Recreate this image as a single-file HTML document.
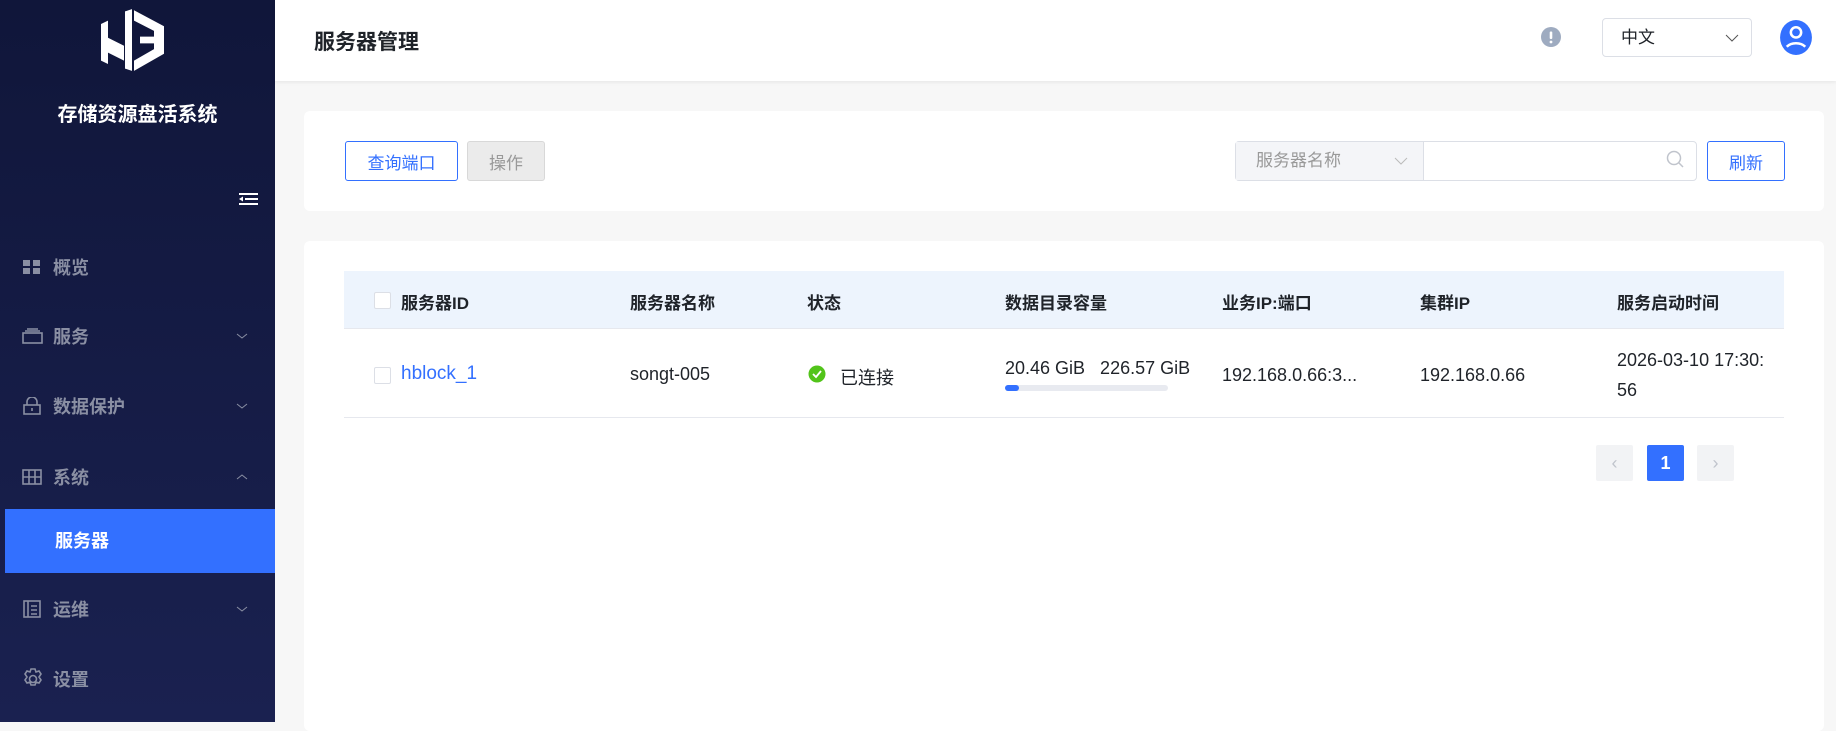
<!DOCTYPE html>
<html><head><meta charset="utf-8"><style>
*{margin:0;padding:0;box-sizing:border-box}
body{width:1836px;height:722px;overflow:hidden;background:#f7f7f7;font-family:"Liberation Sans","Noto Sans CJK SC",sans-serif;position:relative;color:#1f2329}
.side{position:absolute;left:0;top:0;width:275px;height:722px;background:linear-gradient(#10163a,#1a2150)}
.abs{position:absolute}
.mi{position:absolute;left:0;width:275px;height:40px;color:#8a8fa3;font-size:18px;font-weight:bold;display:flex;align-items:center}
.mi .t{position:absolute;left:53px}
.mi svg.i{position:absolute;left:22px}
.mi .ch{position:absolute;left:236px}
.hdr{position:absolute;left:275px;top:0;right:0;height:81px;background:#fff;box-shadow:0 1px 4px rgba(0,0,0,.08)}
.card{position:absolute;background:#fff;border-radius:6px}
.btn{position:absolute;height:40px;border:1px solid #3370ff;border-radius:3px;color:#3370ff;font-size:17px;display:flex;align-items:center;justify-content:center;background:#fff}
.th{position:absolute;top:289px;font-size:17px;font-weight:bold;color:#1f2329}
.td{position:absolute;font-size:18px;color:#1f2329}
.cb{position:absolute;width:17px;height:17px;border:1px solid #dcdfe6;border-radius:2px;background:#fff}
.pg{position:absolute;top:445px;width:37px;height:36px;border-radius:2px;display:flex;align-items:center;justify-content:center;font-size:18px}
</style></head><body>
<div class="side">
<svg class="abs" style="left:98px;top:8px" width="70" height="64" viewBox="0 0 70 56" preserveAspectRatio="none">
<polygon points="3,14 10,11 10,26 26,33 26,46 10,39 10,49 3,46" fill="#fff"/>
<polygon points="27,3 34,1 34,55 27,53" fill="#fff"/>
<polygon points="36,2 66,16 66,40 36,55 36,46 56,36 56,31 42,31 42,25 56,25 56,20 36,11" fill="#fff"/>
</svg>
<div class="abs" style="left:0;width:275px;top:103px;text-align:center;color:#fff;font-size:20px;font-weight:bold;line-height:24px">存储资源盘活系统</div>
<svg class="abs" style="left:239px;top:192px" width="20" height="14" viewBox="0 0 20 14"><rect x="0" y="1" width="19" height="2" fill="#fff"/><rect x="6" y="6" width="13" height="2" fill="#fff"/><rect x="0" y="11" width="19" height="2" fill="#fff"/><polygon points="0,7 4,4.5 4,9.5" fill="#fff"/></svg>
<div class="mi" style="top:247px"><svg class="i" width="20" height="14" viewBox="0 0 20 14"><rect x="1" y="0" width="7" height="6" fill="#8a8fa3"/><rect x="11" y="0" width="7" height="6" fill="#8a8fa3"/><rect x="1" y="8" width="7" height="6" fill="#8a8fa3"/><rect x="11" y="8" width="7" height="6" fill="#8a8fa3"/></svg><span class="t">概览</span></div>
<div class="mi" style="top:316px"><svg class="i" width="22" height="16" viewBox="0 0 22 16" fill="none" stroke="#8a8fa3" stroke-width="1.6"><rect x="1" y="5" width="19" height="10"/><path d="M3 3h15M5 1h11"/></svg><span class="t">服务</span><svg class="ch" width="12" height="8" viewBox="0 0 12 8"><path d="M1 2l5 4 5-4" stroke="#8a8fa3" fill="none"/></svg></div>
<div class="mi" style="top:386px"><svg class="i" width="20" height="18" viewBox="0 0 20 18" fill="none" stroke="#8a8fa3" stroke-width="1.6"><rect x="2" y="8" width="16" height="9"/><path d="M5 8V5a5 5 0 0 1 10 0v3M10 11v3"/></svg><span class="t">数据保护</span><svg class="ch" width="12" height="8" viewBox="0 0 12 8"><path d="M1 2l5 4 5-4" stroke="#8a8fa3" fill="none"/></svg></div>
<div class="mi" style="top:457px"><svg class="i" width="20" height="16" viewBox="0 0 20 16" fill="none" stroke="#8a8fa3" stroke-width="1.6"><rect x="1" y="1" width="18" height="14"/><path d="M7 1v14M13 1v14M1 8h18"/></svg><span class="t">系统</span><svg class="ch" width="12" height="8" viewBox="0 0 12 8"><path d="M1 6l5-4 5 4" stroke="#8a8fa3" fill="none"/></svg></div>
<div class="abs" style="left:5px;top:509px;width:270px;height:64px;background:#3370ff;color:#fff;font-size:18px;font-weight:bold;line-height:64px;padding-left:50px">服务器</div>
<div class="mi" style="top:589px"><svg class="i" width="20" height="18" viewBox="0 0 20 18" fill="none" stroke="#8a8fa3" stroke-width="1.6"><rect x="2" y="1" width="16" height="16"/><path d="M6 1v16M9 6h6M9 10h6M9 14h6"/></svg><span class="t">运维</span><svg class="ch" width="12" height="8" viewBox="0 0 12 8"><path d="M1 2l5 4 5-4" stroke="#8a8fa3" fill="none"/></svg></div>
<div class="mi" style="top:659px"><svg class="i" width="22" height="22" viewBox="0 0 22 22" fill="none" stroke="#8a8fa3" stroke-width="1.6"><path d="M9 1h4l1 3 3-1 2 3-2 3 2 3-2 3-3-1-1 3H9l-1-3-3 1-2-3 2-3-2-3 2-3 3 1z"/><circle cx="11" cy="11" r="3.5"/></svg><span class="t">设置</span></div>
</div>
<div class="hdr">
<div class="abs" style="left:39px;top:26px;font-size:21px;font-weight:bold">服务器管理</div>
<svg class="abs" style="left:1266px;top:27px" width="20" height="20"><circle cx="10" cy="10" r="10" fill="#9eabc0"/><rect x="8.7" y="4.5" width="2.6" height="7.5" rx="1" fill="#fff"/><circle cx="10" cy="15" r="1.4" fill="#fff"/></svg>
<div class="abs" style="left:1327px;top:18px;width:150px;height:39px;border:1px solid #dcdfe6;border-radius:4px;font-size:17px;line-height:37px;padding-left:18px">中文<svg class="abs" style="left:122px;top:15px" width="14" height="8" viewBox="0 0 14 8"><path d="M1 1l6 6 6-6" stroke="#555" fill="none"/></svg></div>
<svg class="abs" style="left:1503px;top:19px" width="36" height="37" viewBox="0 0 32 36"><ellipse cx="16" cy="18" rx="15.5" ry="17" fill="#3370ff"/><circle cx="16" cy="13" r="5" fill="none" stroke="#fff" stroke-width="2.5"/><path d="M7 27a11 8 0 0 1 18 0" fill="none" stroke="#fff" stroke-width="2.5"/></svg>
</div>
<div class="card" style="left:304px;top:111px;width:1520px;height:100px"></div>
<div class="btn" style="left:345px;top:141px;width:113px">查询端口</div>
<div class="btn" style="left:467px;top:141px;width:78px;border-color:#d8d8d8;background:#ebebeb;color:#999">操作</div>
<div class="abs" style="left:1235px;top:141px;width:462px;height:40px;border:1px solid #dcdfe6;border-radius:4px;background:#fff"></div>
<div class="abs" style="left:1236px;top:142px;width:188px;height:38px;background:#f4f5f8;border-right:1px solid #dcdfe6;color:#999;font-size:17px;line-height:38px;padding-left:20px">服务器名称<svg class="abs" style="left:158px;top:15px" width="14" height="8" viewBox="0 0 14 8"><path d="M1 1l6 6 6-6" stroke="#bbb" fill="none"/></svg></div>
<svg class="abs" style="left:1666px;top:150px" width="18" height="20" viewBox="0 0 18 20" fill="none" stroke="#c0c4cc" stroke-width="1.5"><circle cx="8" cy="8" r="6.5"/><path d="M13 13l4 4"/></svg>
<div class="btn" style="left:1707px;top:141px;width:78px">刷新</div>
<div class="card" style="left:304px;top:241px;width:1520px;height:490px"></div>
<div class="abs" style="left:344px;top:271px;width:1440px;height:58px;background:#edf4fd;border-bottom:1px solid #e6e8ee"></div>
<div class="cb" style="left:374px;top:292px"></div>
<div class="th" style="left:401px">服务器ID</div>
<div class="th" style="left:630px">服务器名称</div>
<div class="th" style="left:807px">状态</div>
<div class="th" style="left:1005px">数据目录容量</div>
<div class="th" style="left:1222px">业务IP:端口</div>
<div class="th" style="left:1420px">集群IP</div>
<div class="th" style="left:1617px">服务启动时间</div>
<div class="cb" style="left:374px;top:367px"></div>
<div class="td" style="left:401px;top:363px;color:#3370ff;font-size:19px">hblock_1</div>
<div class="td" style="left:630px;top:364px">songt-005</div>
<svg class="abs" style="left:808px;top:365px" width="18" height="18"><circle cx="9" cy="9" r="8.5" fill="#52c41a"/><path d="M5 9l3 3 5-6" stroke="#fff" stroke-width="1.8" fill="none"/></svg>
<div class="td" style="left:840px;top:364px">已连接</div>
<div class="td" style="left:1005px;top:358px">20.46 GiB&nbsp;&nbsp;&nbsp;226.57 GiB</div>
<div class="abs" style="left:1005px;top:385px;width:163px;height:6px;border-radius:3px;background:#e8eaf0"><div style="width:14px;height:6px;border-radius:3px;background:#3370ff"></div></div>
<div class="td" style="left:1222px;top:365px">192.168.0.66:3...</div>
<div class="td" style="left:1420px;top:365px">192.168.0.66</div>
<div class="td" style="left:1617px;top:345px;line-height:30px">2026-03-10 17:30:<br>56</div>
<div class="abs" style="left:344px;top:417px;width:1440px;height:1px;background:#e6e8ee"></div>
<div class="pg" style="left:1596px;background:#f2f3f5;color:#c0c4cc">‹</div>
<div class="pg" style="left:1647px;background:#3370ff;color:#fff;font-weight:bold">1</div>
<div class="pg" style="left:1697px;background:#f2f3f5;color:#c0c4cc">›</div>
</body></html>
